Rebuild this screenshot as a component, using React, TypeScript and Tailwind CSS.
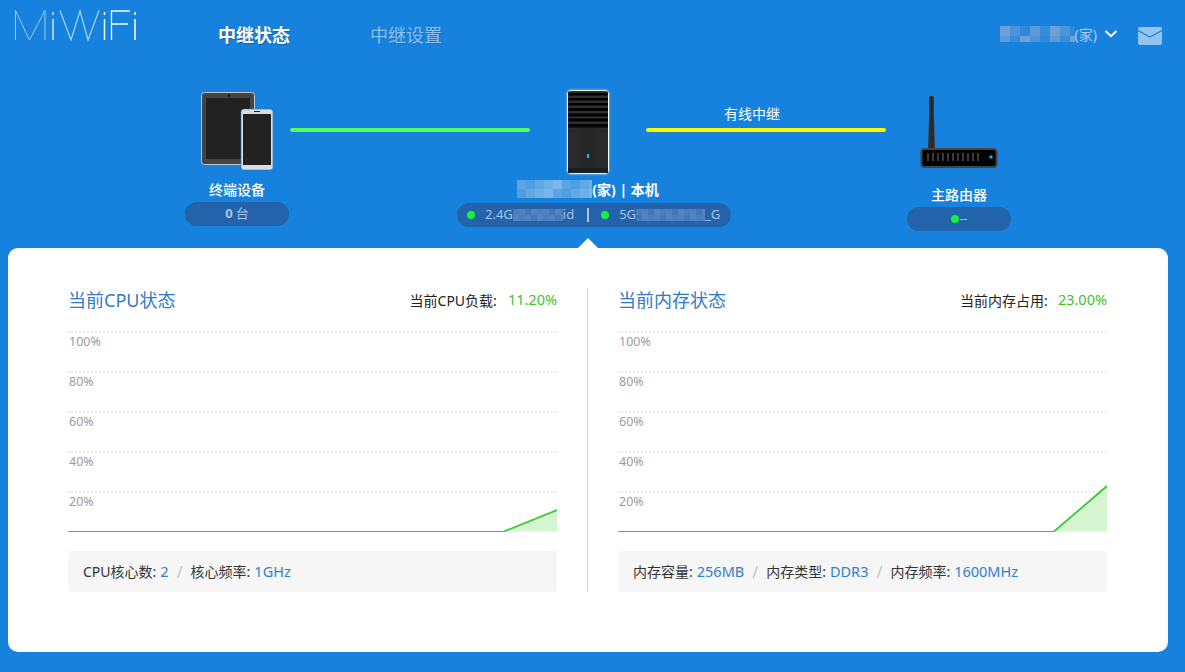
import React from "react";

function Mosaic({ w, h, colors, cell = 10 }: { w: number; h: number; colors: string[]; cell?: number }) {
  const rects: React.ReactNode[] = [];
  let k = 0;
  for (let y = 0; y < h; y += cell) {
    for (let x = 0; x < w; x += cell) {
      rects.push(<rect key={k} x={x} y={y} width={cell} height={cell} fill={colors[(k * 7 + y) % colors.length]} />);
      k++;
    }
  }
  return (
    <svg width={w} height={h} className="block shrink-0">
      {rects}
    </svg>
  );
}

function Logo() {
  return (
    <svg width="122" height="34" viewBox="0 0 122 34" className="block" fill="none" aria-label="MiWiFi">
      <path d="M0.5 32V2.5L14.5 32L30 2.5V32" stroke="#9ccbf3" strokeWidth="1" />
      <path d="M38 11V32M38 4V7" stroke="#cfe6fa" strokeWidth="1.5" />
      <path d="M45 2.5L56 32L65 3L73 32L84 2.5" stroke="#b5d8f6" strokeWidth="1.1" />
      <path d="M89.5 11V32M89.5 4V7" stroke="#eef7ff" strokeWidth="1.5" />
      <path d="M96.5 32V3H115M96.5 16H113" stroke="#f7fbff" strokeWidth="1.3" />
      <path d="M120 11V32M120 4V7" stroke="#ffffff" strokeWidth="1.5" />
    </svg>
  );
}

function Devices() {
  return (
    <svg width="72" height="80" viewBox="0 0 72 80" className="block">
      <rect x="0.5" y="0.5" width="53" height="72" rx="3" fill="#444" stroke="#c4c4c4" />
      <rect x="5" y="6" width="44" height="61" fill="#222" />
      <rect x="27" y="2.5" width="2" height="2" fill="#111" />
      <rect x="40" y="17" width="32" height="61" rx="3" fill="#dcdcdc" stroke="#1a78cc" strokeWidth="0.6" />
      <rect x="42" y="22" width="28" height="51" fill="#222" />
      <rect x="53" y="19" width="6" height="1" fill="#222" />
    </svg>
  );
}

function Tower() {
  return (
    <svg width="48" height="90" viewBox="0 0 48 90" className="block">
      <rect x="1.5" y="1.5" width="45" height="87" rx="5" fill="#5aa9ec" opacity="0.55" />
      <rect x="3.5" y="3.5" width="41" height="83" rx="3.5" fill="#2a2a2a" stroke="#fff" strokeWidth="1" />
      <rect x="4" y="4.5" width="40" height="37" fill="#303030" />
      <rect x="4" y="6" width="40" height="2.5" fill="#000" />
      <rect x="4" y="11" width="40" height="2.5" fill="#000" />
      <rect x="4" y="16" width="40" height="2.5" fill="#000" />
      <rect x="4" y="21" width="40" height="3" fill="#000" />
      <rect x="4" y="26.5" width="40" height="3" fill="#000" />
      <rect x="4" y="31.5" width="40" height="3" fill="#000" />
      <rect x="4" y="37" width="40" height="3.5" fill="#000" />
      <rect x="15" y="41" width="18" height="45" fill="#262626" />
      <rect x="4" y="81" width="40" height="5" fill="#1f1f1f" />
      <rect x="23" y="67" width="2" height="4" fill="#1db8f2" />
    </svg>
  );
}

function Router() {
  return (
    <svg width="78" height="72" viewBox="0 0 78 72" className="block">
      <path d="M9 1.5Q9 0 11.5 0Q14 0 14 1.5L14 21L15 53H8L9 21Z" fill="#333" />
      <path d="M11 0h1.5v53H11z" fill="#222" />
      <rect x="1.5" y="53" width="75" height="18" rx="3" fill="#000" stroke="#444" strokeWidth="2" />
      {[7, 12, 17, 22, 27, 32, 37, 42, 47, 52, 57].map((x) => (
        <rect key={x} x={x} y="57" width="2" height="8" fill="#3a3a3a" />
      ))}
      <rect x="69.5" y="59.5" width="3" height="3" fill="#13b3f0" />
    </svg>
  );
}

function Dot({ className = "" }: { className?: string }) {
  return <span className={"block w-2 h-2 rounded-full bg-[#12f33b] shrink-0 " + className} />;
}

const mask1 = ["#5ba4e6", "#6cafe9", "#4f9ee4", "#7ab6eb", "#62a8e7"];
const mask2 = ["#4a7fbf", "#5583bf", "#3f79bb", "#4f82c0"];
const mask3 = ["#6ba0d8", "#5c9ad8", "#4c93da", "#3a8cdb", "#2f88dc"];

function Chart({ y }: { y: number }) {
  const labels = ["100%", "80%", "60%", "40%", "20%"];
  return (
    <div className="relative mt-[19px] w-[489px] h-[201px]">
      {labels.map((l) => (
        <div key={l} className="h-[40px] border-t-2 border-dotted border-[#ececec] pl-px text-[12.5px] leading-[17px] text-[#9c9c9c]">
          {l}
        </div>
      ))}
      <svg width="489" height="201" viewBox="0 0 489 201" className="absolute left-0 top-0">
        <path d={`M436 200.5L489 ${y + 1}V200.5Z`} fill="#d5f5d0" />
        <path d="M0 200.5H436" stroke="#41c13a" strokeWidth="1" fill="none" />
        <path d={`M436 200.5L489 ${y + 1}`} stroke="#38c838" strokeWidth="1.8" fill="none" />
      </svg>
    </div>
  );
}

function Panel({
  title,
  loadLabel,
  load,
  gap,
  y,
  stats,
}: {
  title: string;
  loadLabel: string;
  load: string;
  gap: string;
  y: number;
  stats: { k: string; v: string }[];
}) {
  return (
    <div className="w-[489px] shrink-0">
      <div className="flex justify-between items-center h-[24px]">
        <h2 className="text-[18px] leading-[24px] font-normal text-[#2f7bc9]">{title}</h2>
        <div className="flex items-center text-[14px] text-[#222]">
          <span>{loadLabel}:</span>
          <span className={gap + " text-[14.5px] text-[#3fc22e]"}>{load}</span>
        </div>
      </div>
      <Chart y={y} />
      <div className="mt-[19px] h-[41px] rounded-[3px] bg-[#f6f6f6] px-[15px] flex items-center text-[14px] text-[#333]">
        {stats.map((s, i) => (
          <React.Fragment key={s.k}>
            {i > 0 && <span className="mx-[8px] text-[16px] text-[#c4c4c4]">/</span>}
            <span>{s.k}: </span>
            <span className="ml-[4px] text-[14.5px] text-[#2f7fd1]">{s.v}</span>
          </React.Fragment>
        ))}
      </div>
    </div>
  );
}

export default function App() {
  return (
    <div className="w-full h-[672px] bg-[#1782dd] overflow-hidden flex flex-col text-white [font-family:'Noto_Sans','Noto_Sans_CJK_SC',sans-serif]">
      <header className="h-[68px] flex items-start shrink-0 pl-[15px]">
        <div className="pt-[8px] w-[203px] shrink-0">
          <Logo />
        </div>
        <nav className="flex items-center gap-[80px] h-[70px] text-[18px]">
          <a className="font-bold text-white [text-shadow:1px_1px_1px_rgba(0,0,0,0.25)]">中继状态</a>
          <a className="text-[#8cc0ee] [text-shadow:1px_1px_1px_rgba(0,0,0,0.1)]">中继设置</a>
        </nav>
        <div className="ml-auto pr-[23px] h-[68px] flex items-center">
          <div className="flex items-center">
            <Mosaic w={75} h={16} cell={10} colors={mask3} />
            <span className="text-[14px] text-[#a9cdf0]">(家)</span>
          </div>
          <svg width="14" height="8" viewBox="0 0 14 8" className="ml-[7px] block" fill="none">
            <path d="M1.5 1L7 6.2L12.5 1" stroke="#fff" strokeWidth="2" />
          </svg>
          <svg width="24" height="18" viewBox="0 0 24 18" className="ml-[20px] mt-[4px] block">
            <rect width="24" height="18" rx="2" fill="#94c5f1" />
            <path d="M0 3.5L12 10L24 3.5" stroke="#1782dd" strokeWidth="1.2" fill="none" />
          </svg>
        </div>
      </header>

      <section className="h-[180px] shrink-0 flex items-start pl-[185px]">
        <div className="w-[104px] shrink-0 pt-[24px] flex flex-col items-center">
          <Devices />
          <div className="mt-[8px] text-[14px] leading-[20px] font-medium">终端设备</div>
          <div className="mt-[2px] w-[104px] h-[24px] rounded-full bg-[#2263ab] flex items-center justify-center text-[13px] text-[#a8c3e6]">
            <b className="font-bold">0</b>
            <span className="ml-[3px]">台</span>
          </div>
        </div>

        <div className="ml-px w-[240px] shrink-0 h-[4px] mt-[60px] rounded-full bg-[#55fd5c]" />

        <div className="w-[116px] shrink-0 pt-[19px] flex flex-col items-center">
          <Tower />
          <div className="mt-[1px] h-[22px] flex items-center text-[14px] font-bold whitespace-nowrap">
            <Mosaic w={75} h={18} cell={9} colors={mask1} />
            <span>(家) | 本机</span>
          </div>
          <div className="mt-[3px] self-start -ml-[73px] w-[274px] shrink-0 h-[24px] rounded-full bg-[#2263ab] flex items-center text-[13px] text-[#a8c3e6] whitespace-nowrap">
            <Dot className="ml-[10px]" />
            <span className="ml-[10px]">2.4G</span>
            <Mosaic w={50} h={12} cell={6} colors={mask2} />
            <span>id</span>
            <span className="ml-[13px] w-[2px] h-[14px] bg-[#a8c3e6]" />
            <Dot className="ml-[12px]" />
            <span className="ml-[10px]">5G</span>
            <Mosaic w={69} h={12} cell={6} colors={mask2} />
            <span>_G</span>
          </div>
        </div>

        <div className="w-[240px] shrink-0 pt-[37px]">
          <div className="pl-[78px] text-[14px] leading-[18px] h-[19px] whitespace-nowrap">有线中继</div>
          <div className="mt-[4px] h-[4px] rounded-full bg-[#fff700]" />
        </div>

        <div className="ml-[21px] w-[104px] shrink-0 pt-[28px] flex flex-col items-center">
          <Router />
          <div className="mt-[17px] text-[14px] leading-[20px] font-medium">主路由器</div>
          <div className="mt-[2px] w-[104px] h-[24px] rounded-full bg-[#2263ab] flex items-center justify-center text-[12px] text-[#a8c3e6]">
            <Dot />
            <span className="ml-px leading-none">--</span>
          </div>
        </div>
      </section>

      <main className="relative ml-[8px] w-[1160px] h-[404px] shrink-0 rounded-[10px] bg-white flex pt-[40px] pl-[60px]">
        <span className="absolute left-[569px] -top-[10px] w-0 h-0 border-x-[11px] border-x-transparent border-b-[11px] border-b-white" />
        <Panel
          title="当前CPU状态"
          loadLabel="当前CPU负载"
          load="11.20%"
          gap="ml-[11px]"
          y={178}
          stats={[
            { k: "CPU核心数", v: "2" },
            { k: "核心频率", v: "1GHz" },
          ]}
        />
        <div className="ml-[30px] w-px h-[304px] bg-[#d4d4d4] shrink-0" />
        <div className="ml-[30px]">
          <Panel
            title="当前内存状态"
            loadLabel="当前内存占用"
            load="23.00%"
            gap="ml-[10px]"
            y={154}
            stats={[
              { k: "内存容量", v: "256MB" },
              { k: "内存类型", v: "DDR3" },
              { k: "内存频率", v: "1600MHz" },
            ]}
          />
        </div>
      </main>
    </div>
  );
}
